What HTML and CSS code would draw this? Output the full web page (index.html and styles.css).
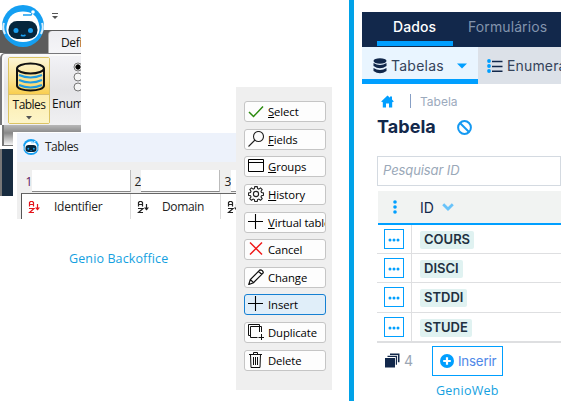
FILE: index.html
```html
<!DOCTYPE html>
<html lang="pt">
<head>
<meta charset="utf-8">
<title>Genio</title>
<link rel="stylesheet" href="styles.css">
</head>
<body>
<svg width="0" height="0" class="defs">
  <symbol id="bot" viewBox="0 0 42 42">
    <circle cx="21" cy="21" r="21" fill="#149ff2"/>
    <path d="M4.500 22C6 10 13 6.500 21 6.500S36 10 37.500 22c1 9-7 15-16.500 15S3.500 31 4.500 22z" fill="#fff"/>
    <path d="M2 18q-2 5 1 11M40 18q2 5-1 11" stroke="#d9ecf8" stroke-width="2" fill="none"/>
    <rect x="6.500" y="16" width="29" height="18" rx="8.500" fill="#06263c"/>
    <circle cx="14" cy="25.500" r="2.500" fill="#199ff0"/><circle cx="28.500" cy="25.500" r="2.500" fill="#199ff0"/>
    <path d="M19 30q2 1.500 4.500 0" stroke="#199ff0" stroke-width="1.600" fill="none"/>
    <path d="M21 10h8l2-4" stroke="#199ff0" stroke-width="1.300" fill="none"/><circle cx="31" cy="7" r="1.800" fill="#fff"/>
  </symbol>
  <symbol id="az" viewBox="0 0 13 12">
    <path d="M1.500 5.500V1.500L2.500.5h2l1 1v4M1.500 3.500h4M1 7.500h5L1.500 11.500H6M9.500 3v6" fill="none" stroke="currentColor" stroke-width="1.200"/>
    <path d="M7 6.500h5L9.500 9.500z" fill="currentColor"/>
  </symbol>
  <symbol id="plus" viewBox="0 0 16 16"><path d="M7.500 0v15M0 7.500h15" stroke="#000" stroke-width="1.100"/></symbol>
  <symbol id="dots" viewBox="0 0 12 4"><g fill="#009fff"><circle cx="2" cy="2" r="1.500"/><circle cx="6" cy="2" r="1.500"/><circle cx="10" cy="2" r="1.500"/></g></symbol>
</svg>
<main class="page">
  <section class="backoffice">
    <div class="ribbon">
      <div class="quick"><svg width="8" height="8"><path d="M1 1.500h6" stroke="#555"/><path d="M1 4h6L4 7z" fill="#555"/></svg></div>
      <div class="tabs-band"><div class="rtab">Defi</div></div>
      <div class="rpanel">
        <div class="bigbtn">
          <div class="bigicon">
            <svg width="32" height="31" viewBox="0 0 32 31" fill="none" stroke="#111" stroke-width="2">
              <path d="M2 6.500v17c0 3 6 5 13.500 5S29 26.500 29 23.500v-17"/><ellipse cx="15.500" cy="6.500" rx="13.500" ry="5"/>
              <path d="M4 13q11.500 5 23 0M4 18q11.500 5 23 0M4 23q11.500 5 23 0" stroke="#209be0"/>
            </svg>
          </div>
          <div class="biglabel">Tables<svg width="6" height="4"><path d="M0 0h6L3 3.500z" fill="#555"/></svg></div>
        </div>
        <div class="enum">
          <svg width="12" height="30" viewBox="0 0 12 30" fill="#f5f5f5" stroke="#777"><circle cx="6" cy="5" r="4"/><circle cx="6" cy="5" r="2.200" fill="#000" stroke="#000"/><circle cx="6" cy="15" r="4"/><circle cx="6" cy="25" r="4"/></svg>
          <span>Enum</span>
        </div>
      </div>
      <div class="ribbon-foot"></div>
      <div class="navy"></div>
      <svg class="logo" width="42" height="42"><use href="#bot"/></svg>
    </div>

    <div class="window">
      <div class="wtitle"><svg width="16" height="16"><use href="#bot"/></svg><span>Tables</span></div>
      <div class="filters"><span>1</span><i></i><span>2</span><i></i><span>3</span><i></i></div>
      <div class="heads">
        <div class="hcell red"><svg width="13" height="12"><use href="#az"/></svg><span>Identifier</span></div>
        <div class="hcell"><svg width="13" height="12"><use href="#az"/></svg><span>Domain</span></div>
        <div class="hcell"><svg width="13" height="12"><use href="#az"/></svg></div>
      </div>
    </div>

    <div class="actions">
      <div class="act"><svg viewBox="0 0 16 16"><path d="M1 9l4.500 4.500L15 3.500" fill="none" stroke="#2b8a0e" stroke-width="1.500"/></svg><span><u>S</u>elect</span></div>
      <div class="act"><svg viewBox="0 0 16 16" fill="none" stroke="#222" stroke-width="1.100"><circle cx="10.500" cy="5.500" r="5"/><path d="M7 9l-6.500 6.500"/></svg><span><u>F</u>ields</span></div>
      <div class="act"><svg viewBox="0 0 16 16" fill="none" stroke="#000"><path d="M.5 1.500h15v12H.5zM.5 4.500h15"/></svg><span><u>G</u>roups</span></div>
      <div class="act"><svg viewBox="0 0 16 16" fill="none" stroke="#222" stroke-width="1.100"><path d="M6.800.6h2.400l.4 2 1.200.5 1.700-1.200 1.700 1.700L13 5.300l.5 1.200 2 .4v2.400l-2 .4-.5 1.200 1.200 1.700-1.700 1.700-1.700-1.200-1.200.5-.4 2H6.800l-.4-2-1.200-.5-1.700 1.200-1.700-1.700L3 10.900l-.5-1.200-2-.4V6.900l2-.4L3 5.300 1.800 3.600l1.700-1.700 1.700 1.200 1.200-.5z"/><circle cx="8" cy="8" r="2.600"/></svg><span><u>H</u>istory</span></div>
      <div class="act"><svg><use href="#plus"/></svg><span><u>V</u>irtual table</span></div>
      <div class="act"><svg viewBox="0 0 16 16"><path d="M2 1.500l12 12M14 1.500l-12 12" stroke="#f01818" stroke-width="1.500"/></svg><span>Cancel</span></div>
      <div class="act"><svg viewBox="0 0 16 16" fill="none" stroke="#111" stroke-width="1.200"><path d="M.8 15.500l1.500-5L12 .8q3 0 3.300 3L5.500 13.700zM10.500 2.300l3.300 3.200M2.300 10.500l3.200 3.200"/></svg><span>Change</span></div>
      <div class="act on"><svg><use href="#plus"/></svg><span>Insert</span></div>
      <div class="act"><svg viewBox="0 0 16 16" fill="none" stroke="#111"><path d="M11.500 8V.5H.5v11h2M13.500 8V2.500h-11v11h7M13.500 10v6M10.500 13.500h5.500"/></svg><span>Duplicate</span></div>
      <div class="act"><svg viewBox="0 0 16 16" fill="none" stroke="#111"><path d="M1 2.500h13M5.500 2.500v-2h4v2M2.500 2.500l.5 13h9l.5-13M5.500 5v8M7.500 5v8M9.500 5v8"/></svg><span>Delete</span></div>
    </div>
    <div class="caption left">Genio Backoffice</div>
  </section>

  <div class="divider"></div>

  <section class="web">
    <nav class="topnav"><div class="cur">Dados</div><div>Formulários</div></nav>
    <div class="subnav">
      <div class="sub active">
        <svg width="14" height="16" viewBox="0 0 14 16" fill="#12284b"><ellipse cx="7" cy="3" rx="6.500" ry="2.700"/><path d="M.5 5q6.500 4 13 0v3q-6.500 4.500-13 0zM.5 10q6.500 4 13 0v3q-6.500 4.500-13 0z"/></svg>
        <span>Tabelas</span>
        <svg width="10" height="6"><path d="M0 .5h10L5 5.500z" fill="#009fff"/></svg>
      </div>
      <div class="sub">
        <svg width="16" height="14" viewBox="0 0 16 14"><path d="M5 2.500h10.500M5 7.500h10.500M5 12.200h10.500" stroke="#12284b" stroke-width="1.500"/><g fill="#009fff"><circle cx="2" cy="2" r="1.900"/><circle cx="2" cy="7" r="1.900"/><circle cx="2" cy="12" r="1.900"/></g></svg>
        <span>Enumerações</span>
      </div>
    </div>
    <div class="crumbs">
      <svg width="13" height="13" viewBox="0 0 13 13"><path d="M6.500.5L9 2.800V1.500h2v3l1.800 2-1 .8-.6-.5V12.500H8V8.500H5v4H1.800V6.800l-.6.5-1-.8z" fill="#009fff"/></svg>
      <i></i><span>Tabela</span>
    </div>
    <div class="title"><h1>Tabela</h1><svg width="15" height="15" viewBox="0 0 15 15" fill="none" stroke="#1499f2" stroke-width="2"><circle cx="7.500" cy="7.500" r="6.400"/><path d="M3 3l9 9"/></svg></div>
    <div class="search">Pesquisar ID</div>
    <div class="thead"><svg width="4" height="14" fill="#009fff"><circle cx="2" cy="2" r="1.800"/><circle cx="2" cy="7" r="1.800"/><circle cx="2" cy="12" r="1.800"/></svg><span>ID</span><svg width="12" height="8" viewBox="0 0 12 8"><path d="M1.200 1.300L6 6l4.800-4.700" fill="none" stroke="#69c3fa" stroke-width="2.800"/></svg></div>
    <div class="row"><div class="menu"><b><svg width="12" height="4"><use href="#dots"/></svg></b></div><div class="val"><span class="w1">COURS</span></div></div>
    <div class="row"><div class="menu"><b><svg width="12" height="4"><use href="#dots"/></svg></b></div><div class="val"><span class="w2">DISCI</span></div></div>
    <div class="row"><div class="menu"><b><svg width="12" height="4"><use href="#dots"/></svg></b></div><div class="val"><span class="w3">STDDI</span></div></div>
    <div class="row last"><div class="menu"><b><svg width="12" height="4"><use href="#dots"/></svg></b></div><div class="val"><span class="w4">STUDE</span></div></div>
    <div class="foot">
      <svg width="15" height="15" viewBox="0 0 15 15" fill="#12284b"><path d="M0 5h10v9.500H0zM2.500 2.800H12v9h-1.200V4H2.500zM5 .5h9.500v8.800h-1.600V1.900H5z"/></svg>
      <span class="count">4</span>
      <div class="insert"><svg width="14" height="14" viewBox="0 0 14 14"><circle cx="7" cy="7" r="7" fill="#009fff"/><path d="M7 3.200v7.600M3.200 7h7.600" stroke="#fff" stroke-width="2.200"/></svg><span>Inserir</span></div>
    </div>
    <div class="caption right">GenioWeb</div>
  </section>
</main>
</body>
</html>
```
FILE: styles.css
```css
* { box-sizing: border-box; }
body { margin: 0; background: #fff; font-family: "Open Sans", sans-serif; }
svg { display: block; flex: none; }
.defs { position: absolute; }
.page { display: grid; grid-template-columns: 349px 5px 1fr; width: 561px; height: 401px; overflow: hidden; }
.backoffice { position: relative; }
.divider { background: #00a2e8; }

/* ribbon */
.ribbon { position: absolute; left: 0; top: 0; width: 81px; height: 196px; overflow: hidden; font-size: 12px; color: #111; }
.quick { height: 30px; padding: 12px 0 0 51px; }
.tabs-band { height: 23px; background: #5c5c5c; padding: 1px 0 0 48px; }
.rtab { height: 23px; padding: 3px 0 0 12px; background: linear-gradient(#eeeef2, #f5f5f8); border-radius: 4px 0 0 0; border-left: 1px solid #aaa; letter-spacing: -.35px; white-space: nowrap; }
.rpanel { height: 72px; display: flex; border: solid #77777a; border-width: 1px 0 0 2px; border-radius: 5px 0 0 0; background: linear-gradient(#f3f3f7, #e4e4e7 50%, #f0f0f2); box-shadow: inset 2px 2px #fafafa; padding: 3px 0 0 6px; }
.bigbtn { width: 42px; height: 67px; flex: none; border: 1px solid #dcc463; border-radius: 2px; }
.bigicon { height: 37px; padding: 4px 0 0 6px; background: linear-gradient(#fdf5d6, #fbe391 60%, #f9ce50); border-bottom: 1px solid #d8bd72; }
.biglabel { display: flex; flex-direction: column; align-items: center; height: 28px; background: linear-gradient(#fcecae, #fdf5c9); line-height: 19px; letter-spacing: -.55px; }
.biglabel svg { margin-top: 2px; }
.enum { padding: 5px 0 0 2px; letter-spacing: -.2px; white-space: nowrap; }
.enum svg { margin-left: 20px; }
.enum span { display: block; line-height: 15px; margin-top: 4px; }
.ribbon-foot { height: 21px; margin: 0 0 3px 2px; border: solid #777; border-width: 0 0 1px 2px; background: linear-gradient(#b8b8b8, #888 40%, #c8c8c8 75%, #f5f5f5); }
.navy { height: 48px; background: #172b3f; border-left: 2px solid #777; }
.logo { position: absolute; left: 2px; top: 5px; }

/* tables window */
.window { position: absolute; left: 13px; top: 132px; width: 223px; height: 87px; border-left: 4px solid #fff; border-top: 1px solid #fff; background: #efefef; font-size: 12px; color: #222; overflow: hidden; }
.wtitle { height: 29px; background: #edf2fb; display: flex; align-items: center; gap: 6px; padding: 0 0 2px 6px; letter-spacing: -.5px; }
.filters { height: 31px; display: grid; grid-template-columns: 15px 99px 10px 79px 11px 20px; padding-top: 8px; line-height: 24px; }
.filters span { text-align: right; letter-spacing: -.3px; }
.filters span:first-child { color: #60205a; }
.filters i { height: 22px; background: #fff; border-right: 1px solid #bbb; border-bottom: 1px solid #888; }
.heads { margin-left: 4px; height: 26px; display: grid; grid-template-columns: 109px 90px 20px; border-top: 1px solid #666; border-left: 1px solid #555; background: #fff; }
.hcell { display: flex; align-items: center; gap: 13px; padding-left: 6px; border-right: 1px solid #ddd; letter-spacing: -.35px; }
.hcell:first-child { letter-spacing: -.25px; }
.hcell:not(:first-child) { gap: 12px; }
.hcell.red svg { color: #e4141c; }

/* side actions */
.actions { position: absolute; left: 236px; top: 87px; width: 96px; height: 303px; padding: 14px 6px 0 8px; background: #efefef; display: grid; grid-template-rows: repeat(10, 21px); row-gap: 6.65px; }
.act { display: flex; align-items: center; gap: 5px; padding: 0 0 1px 3px; border: 1px solid #c5c5c5; border-radius: 3px; background: #fdfdfd; font: 500 11.3px "Open Sans", sans-serif; letter-spacing: -.1px; color: #000; overflow: hidden; white-space: nowrap; }
.act svg { width: 16px; height: 16px; margin-right: -1px; }
.act span { line-height: 16px; padding-top: 2px; }
.act u { text-underline-offset: 1px; }
.act.on { border-color: #1680d2; background: #e0eef9; }

.caption { color: #149fdf; font-size: 12.5px; line-height: 18px; white-space: nowrap; }
.caption.left { position: absolute; left: 69px; top: 250px; letter-spacing: .12px; }

/* web application */
.web { padding: 12px 0 0 8px; overflow: hidden; font-family: Inter, sans-serif; color: #12284b; }
.topnav { height: 35px; background: #12284b; display: flex; padding-left: 15px; font-size: 14px; line-height: 30px; letter-spacing: .1px; color: #8294ad; }
.topnav div { padding-left: 15px; }
.topnav .cur { width: 76px; height: 34px; padding-left: 16px; border-bottom: 5px solid #009fff; color: #fff; font-weight: 500; }
.subnav { height: 37px; display: grid; grid-template-columns: 116px 83px; }
.sub { display: flex; align-items: center; padding-left: 9px; gap: 4px; background: #dce1e8; font-size: 14px; letter-spacing: .15px; color: #34435a; overflow: hidden; }
.sub.active { padding: 0 0 0 11px; background: #e9f5ff; border-bottom: 5px solid #009fff; font-size: 14px; letter-spacing: .25px; }
.sub.active span { width: 62px; margin-top: 5px; }
.sub.active svg { margin-top: 5px; }
.crumbs { display: flex; align-items: center; height: 20px; margin-top: 7px; padding-left: 19px; font-size: 12px; color: #9caabd; }
.crumbs i { width: 1px; height: 14px; margin: 0 9px 0 16px; background: #879fc5; }
.title { height: 32px; display: flex; align-items: center; padding-left: 15px; gap: 21px; }
h1 { margin: 0; font-size: 18px; font-weight: 700; line-height: 24px; letter-spacing: .05px; }
.search { height: 30px; margin: 13px 0 5px 15px; padding-left: 5px; border: 1px solid #d4dae1; font: italic 13px/27px Inter, sans-serif; letter-spacing: -.1px; color: #9aa8b8; }
.thead { height: 34px; margin-left: 16px; display: flex; align-items: center; padding-left: 15px; background: #f1f3f2; border-bottom: 2px solid #009fff; font-size: 14px; }
.thead span { width: 22px; margin-left: 23px; padding-top: 1px; }
.row { height: 29.2px; margin-left: 15px; display: grid; grid-template-columns: 35px 1fr; border-bottom: 1px solid #dedfe1; }
.row.last { border-bottom: 2px solid #dedfe1; height: 30px; }
.menu { border-right: 1px solid #dedfe1; padding: 4px 0 0 7px; }
.menu b { display: flex; align-items: center; justify-content: center; width: 20px; height: 20px; padding-top: 2px; border: 1px solid #009fff; }
.val { padding: 6px 0 0 8px; }
.val span { display: block; height: 18px; padding-left: 4px; border-radius: 2px; background: #e0f2f1; font-size: 13px; line-height: 16px; font-weight: 600; color: #203040; }
.w1 { width: 54px; }
.w2 { width: 43px; }
.w3 { width: 47px; }
.w4 { width: 52px; }
.foot { height: 37px; display: flex; align-items: center; padding: 0 0 1px 23px; }
.count { width: 28px; margin-left: 4px; font-size: 14px; color: #9ba6b4; }
.insert { width: 71px; height: 30px; border: 1px solid #009fff; display: flex; align-items: center; gap: 4px; padding-left: 7px; font-size: 13.3px; letter-spacing: -.2px; color: #5088e8; }
.caption.right { margin: 2px 0 0 74px; font-family: "Open Sans", sans-serif; letter-spacing: .25px; }
```
